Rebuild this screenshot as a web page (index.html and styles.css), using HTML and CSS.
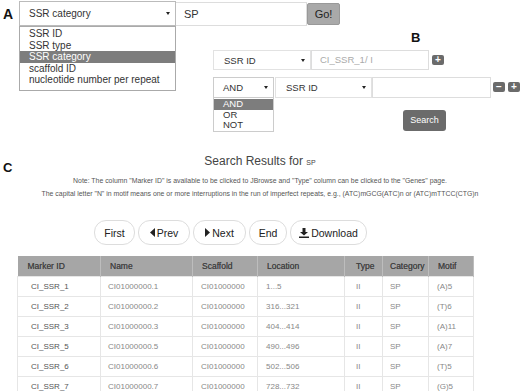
FILE: index.html
```html
<!DOCTYPE html>
<html lang="en">
<head>
    <meta charset="UTF-8">
    <title>SSR Search</title>
    <link rel="stylesheet" href="styles.css">
</head>
<body>

    <!-- A: simple search -->
    <div class="panel-a">
        <div class="fig-label label-a">A</div>
        <div class="fake-select select-a">
            <span>SSR category</span>
            <span class="caret"></span>
        </div>
        <div class="fake-input input-a">SP</div>
        <div class="go-btn">Go!</div>

        <ul class="menu menu-a">
            <li>SSR ID</li>
            <li>SSR type</li>
            <li class="active">SSR category</li>
            <li>scaffold ID</li>
            <li>nucleotide number per repeat</li>
        </ul>
    </div>

    <!-- B: advanced search -->
    <div class="panel-b">
        <div class="fig-label label-b">B</div>
        <div class="b-row row-1">
            <div class="fake-select sel-field">
                <span>SSR ID</span>
                <span class="caret"></span>
            </div>
            <div class="fake-input in-1 placeholder">CI_SSR_1/ I</div>
            <div class="mini-btn">+</div>
        </div>
        <div class="b-row row-2">
            <div class="fake-select sel-op">
                <span>AND</span>
                <span class="caret"></span>
            </div>
            <div class="fake-select sel-field2">
                <span>SSR ID</span>
                <span class="caret"></span>
            </div>
            <div class="fake-input in-2"></div>
            <div class="mini-btn minus">&minus;</div>
            <div class="mini-btn">+</div>
        </div>
        <div class="search-row">
            <div class="search-btn">Search</div>
        </div>

        <ul class="menu menu-b">
            <li class="active">AND</li>
            <li>OR</li>
            <li>NOT</li>
        </ul>
    </div>

    <!-- C: results -->
    <div class="panel-c">
        <div class="results-head">
            <div class="fig-label label-c">C</div>
            <div class="title">Search Results for <small>SP</small></div>
        </div>
        <p class="note">Note: The column "Marker ID" is available to be clicked to JBrowse and "Type" column can be clicked to the "Genes" page.</p>
        <p class="note">The capital letter "N" in motif means one or more interruptions in the run of imperfect repeats, e.g., (ATC)mGCG(ATC)n or (ATC)mTTCC(CTG)n</p>

        <div class="pager">
            <div class="pill w-first">First</div>
            <div class="pill w-prev">
                <svg width="5" height="9" viewBox="0 0 5 9"><path d="M5 0 L0 4.5 L5 9 Z" fill="#222"/></svg>Prev
            </div>
            <div class="pill w-next">
                <svg width="5" height="9" viewBox="0 0 5 9"><path d="M0 0 L5 4.5 L0 9 Z" fill="#222"/></svg>Next
            </div>
            <div class="pill w-end">End</div>
            <div class="pill w-down">
                <svg width="10" height="10" viewBox="0 0 10 10"><path d="M3.5 0 H6.5 V4 H9 L5 7.5 L1 4 H3.5 Z M0 8.4 H10 V10 H0 Z" fill="#222"/></svg>Download
            </div>
        </div>

        <table class="results">
            <colgroup>
                <col style="width:83px">
                <col style="width:92px">
                <col style="width:65px">
                <col style="width:87px">
                <col style="width:38px">
                <col style="width:46px">
                <col style="width:45px">
            </colgroup>
            <thead>
                <tr>
                    <th>Marker ID</th>
                    <th>Name</th>
                    <th>Scaffold</th>
                    <th>Location</th>
                    <th>Type</th>
                    <th>Category</th>
                    <th>Motif</th>
                </tr>
            </thead>
            <tbody id="rows"></tbody>
        </table>
    </div>

    <script>
        const results = [
            ['CI_SSR_1', 'CI01000000.1', 'CI01000000', '1...5', 'II', 'SP', '(A)5'],
            ['CI_SSR_2', 'CI01000000.2', 'CI01000000', '316...321', 'II', 'SP', '(T)6'],
            ['CI_SSR_3', 'CI01000000.3', 'CI01000000', '404...414', 'II', 'SP', '(A)11'],
            ['CI_SSR_5', 'CI01000000.5', 'CI01000000', '490...496', 'II', 'SP', '(A)7'],
            ['CI_SSR_6', 'CI01000000.6', 'CI01000000', '502...506', 'II', 'SP', '(T)5'],
            ['CI_SSR_7', 'CI01000000.7', 'CI01000000', '728...732', 'II', 'SP', '(G)5']
        ];

        let html = '';
        results.forEach(r => {
            html += '<tr>';
            r.forEach(cell => {
                html += `<td>${cell}</td>`;
            });
            html += '</tr>';
        });
        document.getElementById('rows').innerHTML = html;
    </script>
</body>
</html>
```

FILE: styles.css
```css
body {
    margin: 0;
    width: 520px;
    height: 391px;
    overflow: hidden;
    font-family: "Liberation Sans", Arial, sans-serif;
    color: #333;
    background: #fff;
}
.fig-label {
    font-weight: bold;
    color: #111;
}

/* panel A */
.panel-a {
    position: relative;
    display: flex;
    align-items: flex-start;
    height: 30px;
    padding-top: 1px;
    box-sizing: border-box;
}
.label-a {
    width: 16px;
    padding-left: 3px;
    font-size: 14px;
    line-height: 14px;
    margin-top: 6px;
}
.fake-select {
    display: flex;
    align-items: center;
    justify-content: space-between;
    box-sizing: border-box;
    border: 1px solid #ccc;
    background: #fff;
    color: #333;
}
.caret {
    width: 0;
    height: 0;
    border-left: 2px solid transparent;
    border-right: 2px solid transparent;
    border-top: 3px solid #222;
}
.fake-input {
    box-sizing: border-box;
    border: 1px solid #ddd;
    background: #fff;
}
.select-a {
    width: 157px;
    height: 25px;
    padding: 0 5px 0 9px;
    font-size: 10px;
    border-color: #bbb;
}
.input-a {
    width: 131px;
    height: 24px;
    margin-top: 1px;
    border-left: none;
    padding-left: 8px;
    font-size: 11px;
    line-height: 22px;
}
.go-btn {
    width: 33px;
    height: 22px;
    margin-top: 2px;
    box-sizing: border-box;
    background: #a9a9a9;
    border: 1px solid #999;
    border-radius: 2px;
    font-size: 11px;
    line-height: 20px;
    text-align: center;
    color: #222;
}
.menu {
    position: absolute;
    margin: 0;
    padding: 0;
    list-style: none;
    background: #fff;
    border: 1px solid #aaa;
    box-sizing: border-box;
    color: #333;
}
.menu .active {
    background: #7d7d7d;
    color: #fff;
}
.menu-a {
    left: 19px;
    top: 26px;
    width: 157px;
    height: 65px;
    padding-top: 1px;
    font-size: 10px;
    line-height: 11.6px;
}
.menu-a li {
    padding-left: 9px;
}

/* panel B */
.panel-b {
    position: relative;
    height: 110px;
}
.label-b {
    margin-left: 411px;
    height: 16px;
    font-size: 13px;
    line-height: 16px;
}
.b-row {
    display: flex;
    align-items: center;
    margin-left: 213px;
    height: 20px;
    font-size: 9.5px;
}
.row-1 {
    margin-top: 4px;
}
.row-2 {
    margin-top: 7px;
}
.sel-field {
    width: 98px;
    height: 20px;
    padding: 0 5px 0 10px;
    border-color: #e2e2e2;
}
.in-1 {
    width: 118px;
    height: 20px;
    padding-left: 8px;
    line-height: 18px;
}
.placeholder {
    color: #aaa;
}
.sel-op {
    width: 61px;
    height: 21px;
    padding: 0 5px 0 9px;
    border-color: #ccc;
}
.sel-field2 {
    width: 97px;
    height: 21px;
    margin-left: 1px;
    padding: 0 5px 0 10px;
    border-color: #e2e2e2;
}
.in-2 {
    width: 119px;
    height: 21px;
}
.mini-btn {
    width: 12px;
    height: 10px;
    margin-left: 3px;
    background: #6b6b6b;
    border-radius: 2px;
    color: #fff;
    font-size: 10px;
    font-weight: bold;
    line-height: 10px;
    text-align: center;
}
.minus {
    margin-left: 2px;
}
.search-row {
    display: flex;
    margin-top: 13px;
    margin-left: 403px;
}
.search-btn {
    width: 43px;
    height: 21px;
    background: #6b6b6b;
    border-radius: 3px;
    color: #fff;
    font-size: 9px;
    line-height: 21px;
    text-align: center;
}
.menu-b {
    left: 213px;
    top: 67px;
    width: 61px;
    height: 35px;
    font-size: 9.5px;
    line-height: 10.5px;
    padding-top: 1px;
    border-color: #ccc;
}
.menu-b li {
    padding-left: 9px;
}

/* panel C */
.results-head {
    display: flex;
    margin-top: 13px;
}
.label-c {
    width: 20px;
    padding-left: 3px;
    box-sizing: border-box;
    margin-top: 8px;
    font-size: 13px;
    line-height: 14px;
}
.title {
    flex: 1;
    margin-right: 20px;
    text-align: center;
    font-size: 12px;
    line-height: 16px;
    color: #444;
}
.title small {
    font-size: 7px;
}
.note {
    margin: 0;
    height: 12.5px;
    font-size: 6.9px;
    line-height: 12.5px;
    text-align: center;
    color: #555;
}
.pager {
    display: flex;
    gap: 3px;
    margin-top: 20px;
    margin-left: 94px;
}
.pill {
    display: flex;
    align-items: center;
    justify-content: center;
    gap: 2px;
    height: 25px;
    box-sizing: border-box;
    border: 1px solid #ddd;
    border-radius: 12px;
    font-size: 10.5px;
    color: #222;
}
.w-first { width: 41px; }
.w-prev { width: 52px; }
.w-next { width: 53px; }
.w-end { width: 38px; }
.w-down { width: 77px; }
.results {
    margin-top: 11px;
    margin-left: 17px;
    width: 456px;
    border-collapse: collapse;
    table-layout: fixed;
    font-size: 8px;
}
.results th {
    height: 20px;
    padding: 0 0 0 9px;
    background: #a6a6a6;
    color: #444;
    font-size: 8.5px;
    font-weight: normal;
    text-align: left;
    border-right: 1px solid #bdbdbd;
    text-shadow: 0 0 0.4px #444;
}
.results td {
    height: 19px;
    padding: 0 0 0 8px;
    color: #888;
    border: 1px solid #e6e6e6;
}
.results th:first-child {
    padding-left: 10px;
}
.results td:first-child {
    padding-left: 13px;
    color: #555;
}
.results td:nth-child(2),
.results th:nth-child(6),
.results td:nth-child(6) {
    padding-left: 7px;
}
.results th:nth-child(5),
.results td:nth-child(5) {
    padding-left: 11px;
}
```
